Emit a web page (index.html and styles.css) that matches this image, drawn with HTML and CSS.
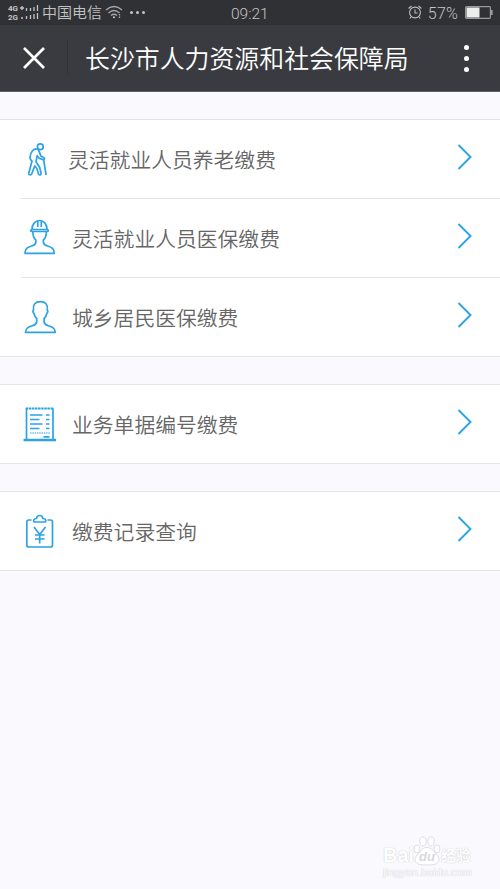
FILE: index.html
```
<!DOCTYPE html>
<html lang="zh-CN">
  <head>
    <meta charset="UTF-8" />
    <meta name="viewport" content="width=device-width, initial-scale=1.0" />
    <title>长沙市人力资源和社会保障局</title>
    <link rel="stylesheet" href="styles.css">
  </head>
  <body>
    <div class="status-bar">
      <div class="status-left">
        <div class="network"><span>4G</span><span>2G</span></div>
        <svg class="signal" width="19" height="16" viewBox="0 0 19 16" fill="none" stroke="#c4c4c5">
          <path d="M0 3h4M2 1v4M1 13h2M6.500 3v3M6.500 11v3M10.500 3v3M10.500 10v4M14 2v4M14 9v5M17.500 0v6M17.500 8v6" stroke-width="1.300" />
        </svg>
        <span class="carrier">中国电信</span>
        <svg class="wifi" width="18" height="15" viewBox="0 0 18 15" fill="none" stroke="#a9a9ab" stroke-width="1.300">
          <path d="M1 5Q9-2 17 5M3.500 8Q9 3 14.500 8M6 10.500Q9 8 12 10.500" />
          <circle cx="9" cy="12.300" r="1" fill="#ccc" stroke="none" />
          <path d="M14.500 9v4" stroke-dasharray="1.500 1" />
        </svg>
        <span class="dots"><i></i><i></i><i></i></span>
      </div>
      <span class="time">09:21</span>
      <div class="status-right">
        <svg class="alarm" width="14" height="15" viewBox="0 0 14 15" fill="none" stroke="#bdbdbe" stroke-width="1.100">
          <circle cx="7" cy="7.500" r="5.400" />
          <path d="M7 4.500v3.500h2.500M.6 3.500L3.500 1M13.400 3.500L10.500 1M3 12l-1.200 1.500M11 12l1.200 1.500" />
        </svg>
        <span class="percent">57%</span>
        <svg class="battery" width="28" height="13" viewBox="0 0 28 13">
          <rect x=".6" y=".6" width="24.800" height="11.800" rx="1" fill="none" stroke="#99999b" stroke-width="1.200" />
          <rect x="1.500" y="1.500" width="13" height="10" fill="#ececec" />
          <path d="M26 4h1.700v5H26z" fill="#99999b" />
        </svg>
      </div>
    </div>

    <header class="header">
      <svg class="close" width="22" height="22" viewBox="0 0 22 22" fill="none" stroke="#fff" stroke-width="2.700">
        <path d="M1 1l20 20M21 1L1 21" />
      </svg>
      <h1>长沙市人力资源和社会保障局</h1>
      <span class="more"><i></i><i></i><i></i></span>
    </header>

    <main>
      <ul class="group">
        <li class="item narrow">
          <svg class="icon" width="34" height="36" viewBox="0 0 34 36">
            <circle cx="17.300" cy="6.800" r="2.900" />
            <path d="M13.500 8.800C10.500 8.600 7.500 12 7 17c-.2 1.800.6 3 2 4L5.800 33c-.5 2 2.300 2.500 3 .7L11.700 26l2.200 2.500 1.500 5.300c.6 1.800 3.200 1.200 2.700-.6l-1.500-6-3.600-5.500 1.200-6 2 2.500 3.800 1.500c1.500.3 2-1.300.8-2l-3-1.800-2-5.300C15.200 9.400 14.500 8.800 13.500 8.800zM20.500 19l2.600 16" />
          </svg>
          <span class="label">灵活就业人员养老缴费</span>
          <svg class="arrow" width="16" height="26" viewBox="0 0 16 26"><path d="M1.500 1L13.500 13 1.500 25" /></svg>
        </li>
        <li class="item">
          <svg class="icon" width="34" height="36" viewBox="0 0 34 36">
            <path d="M9 10.500C9 5.500 12 1.500 16.500 1.500s7.500 4 7.500 9M9 10.500h15q1.300 0 1.300 1t-1.300 1H9q-1.300 0-1.300-1t1.300-1zM14.800 8V2M18.300 8V2" />
            <path d="M9.800 12.500C9.800 16.500 11 19.500 12.800 21v2.500C12.500 25.500 11 26.300 8.500 27 4.500 28.200 2 29.500 2 34.300H31.200C31.200 29.500 28.700 28.200 24.700 27 22.200 26.300 20.700 25.500 20.400 23.500V21c1.800-1.500 3-4.500 3-8.500" />
          </svg>
          <span class="label">灵活就业人员医保缴费</span>
          <svg class="arrow" width="16" height="26" viewBox="0 0 16 26"><path d="M1.500 1L13.500 13 1.500 25" /></svg>
        </li>
        <li class="item">
          <svg class="icon" width="34" height="36" viewBox="0 0 34 36">
            <path d="M13.700 20.500C12.200 19.300 11.400 17.500 11 15.500 10 14.500 9.800 13 10.500 12 9.800 6.500 12.300 3.700 17.400 3.700s7.600 2.800 6.900 8.300c.7 1 .5 2.500-.5 3.500-.4 2-1.200 3.800-2.700 5v3.500C21.500 26.200 23 27 25.300 27.800 29.300 29 32 30 32.300 34.300H2.500C2.800 30 5.500 29 9.500 27.800 11.800 27 13.300 26.200 13.700 24z" />
          </svg>
          <span class="label">城乡居民医保缴费</span>
          <svg class="arrow" width="16" height="26" viewBox="0 0 16 26"><path d="M1.500 1L13.500 13 1.500 25" /></svg>
        </li>
      </ul>

      <ul class="group">
        <li class="item">
          <svg class="icon low" width="34" height="36" viewBox="0 0 34 36">
            <path d="M3.500 33V2.500M30 33V2.500" />
            <path d="M2.700 2.500h28.200" stroke-width="2" stroke-dasharray="2.500 .6" />
            <path d="M.5 34h32.500" stroke-width="2.400" />
            <path d="M7 9h12.500M7 13.500h9.500M7 18h12.500M7 22.500h9.500M23 9h3.500M23 13.500h3.500M23 18h3.500M23 22.500h3.500M20.500 30.800h6" />
            <path d="M7 27h20" stroke-dasharray="1.500 .8" stroke-width="1.200" />
          </svg>
          <span class="label">业务单据编号缴费</span>
          <svg class="arrow" width="16" height="26" viewBox="0 0 16 26"><path d="M1.500 1L13.500 13 1.500 25" /></svg>
        </li>
      </ul>

      <ul class="group">
        <li class="item">
          <svg class="icon low" width="34" height="36" viewBox="0 0 34 36">
            <path d="M8.500 7H5.800Q3.800 7 3.800 9V32Q3.800 34 5.800 34H27.500Q29.500 34 29.500 32V9Q29.500 7 27.500 7H24.500" />
            <path d="M12 9h9.500q1.500 0 1.300-1.600Q22.500 5.500 19.800 5.500 19.500 2.500 16.700 2.500T13.500 5.500Q11 5.500 10.600 7.400 10.500 9 12 9z" />
            <path d="M11 14l5.700 7.500 5.800-7.500M16.700 21.500V30.500M12 22h9.500M12 26h9.500" />
          </svg>
          <span class="label">缴费记录查询</span>
          <svg class="arrow" width="16" height="26" viewBox="0 0 16 26"><path d="M1.500 1L13.500 13 1.500 25" /></svg>
        </li>
      </ul>
    </main>

    <div class="watermark">
      <div class="brand">
        <span class="latin">Bai</span>
        <span class="paw">
          <svg width="28" height="30" viewBox="0 0 28 30">
            <ellipse cx="4" cy="13" rx="3" ry="4" />
            <ellipse cx="10" cy="5.500" rx="3.200" ry="4.500" />
            <ellipse cx="18" cy="5.500" rx="3.200" ry="4.500" />
            <ellipse cx="24" cy="13" rx="3" ry="4" />
            <path d="M14 11.500c4 0 6 3 9 6.500s3.500 5 2.500 7.500-4 3.500-11.500 3.500-10.500-1-11.500-3.500-.5-4 2.500-7.500 5-6.500 9-6.500z" />
          </svg>
          <b>du</b>
        </span>
        <span class="cn">经验</span>
      </div>
      <div class="site">jingyan.baidu.com</div>
    </div>
  </body>
</html>
```

FILE: styles.css
```
* {
  box-sizing: border-box;
}

body {
  margin: 0;
  height: 889px;
  overflow: hidden;
  background-color: #faf9fe;
  font-family: Roboto, "Noto Sans CJK SC", sans-serif;
  font-weight: 350;
  color: #666;
}

svg {
  display: block;
  flex-shrink: 0;
}

.status-bar {
  display: grid;
  grid-template-columns: 230px 1fr auto;
  align-items: center;
  height: 25px;
  padding: 0 7px 0 8px;
  background-color: #303135;
  color: #c4c4c5;
}

.status-left,
.status-right {
  display: flex;
  align-items: center;
}

.network {
  display: flex;
  flex-direction: column;
  width: 12px;
  font-size: 8px;
  font-weight: 700;
  line-height: 9px;
}

.signal {
  margin-right: 3px;
}

.carrier {
  width: 63px;
  font-size: 15px;
  line-height: 24px;
  white-space: nowrap;
}

.wifi {
  margin-right: 7px;
}

.dots {
  display: flex;
  gap: 3px;
}

.dots i {
  width: 3px;
  height: 3px;
  border-radius: 50%;
  background-color: #c4c4c5;
}

.time {
  margin-left: -7px;
  padding-top: 2px;
  font-size: 15.5px;
}

.percent {
  margin: 0 7px 0 6px;
  padding-top: 1px;
  font-size: 16px;
  letter-spacing: 0.2px;
}

.header {
  display: flex;
  align-items: center;
  height: 67px;
  padding: 0 31px 0 23px;
  border-bottom: 1px solid #606165;
  background-color: #3a3b40;
  color: #fff;
}

.header h1 {
  flex: 1;
  height: 34px;
  margin: 0 0 0 22px;
  padding-left: 17px;
  border-left: 1px solid #303135;
  font-size: 24.9px;
  font-weight: 350;
  line-height: 38px;
  white-space: nowrap;
}

.more {
  display: flex;
  flex-direction: column;
  gap: 6px;
}

.more i {
  width: 5px;
  height: 5px;
  border-radius: 50%;
  background-color: #fff;
}

.group {
  margin: 27px 0 0;
  padding: 0;
  border-top: 1px solid #e4e4e6;
  border-bottom: 1px solid #e4e4e6;
  background-color: #fff;
  list-style: none;
}

.item {
  display: flex;
  align-items: center;
  height: 78px;
  margin-left: 21px;
  padding: 0 27px 0 2px;
}

.item + .item {
  height: 79px;
  border-top: 1px solid #e4e4e6;
}

.icon {
  margin-top: -2px;
  fill: none;
  stroke: #2ba3e4;
  stroke-width: 1.7;
  stroke-linecap: butt;
  stroke-linejoin: round;
}

.icon.low {
  margin-top: 0;
}

.label {
  flex: 1;
  margin-left: 15px;
  padding-top: 4px;
  font-size: 20.8px;
  line-height: 30px;
}

.narrow .label {
  margin-left: 11px;
}

.arrow {
  margin-top: -4px;
  fill: none;
  stroke: #2ba3e4;
  stroke-width: 1.9;
}

.watermark {
  position: absolute;
  left: 383px;
  top: 834px;
  color: #fff;
  font-family: "Liberation Sans", "Noto Sans CJK SC", sans-serif;
  text-shadow: 0 0 1px #c8c8cc, 0 0 1px #d4d4d8;
}

.brand {
  display: flex;
  align-items: flex-end;
  height: 32px;
  font-size: 20px;
  font-weight: 700;
  line-height: 21px;
}

.latin {
  width: 30px;
}

.paw {
  position: relative;
}

.paw svg {
  fill: #fff;
  stroke: #dedee2;
  stroke-width: 1;
}

.paw b {
  position: absolute;
  left: 6px;
  bottom: 1px;
  color: #d8d8dc;
  font-size: 13px;
  font-style: italic;
  line-height: 17px;
  text-shadow: none;
}

.cn {
  font-size: 15px;
}

.site {
  font-size: 11px;
  line-height: 13px;
}
```
